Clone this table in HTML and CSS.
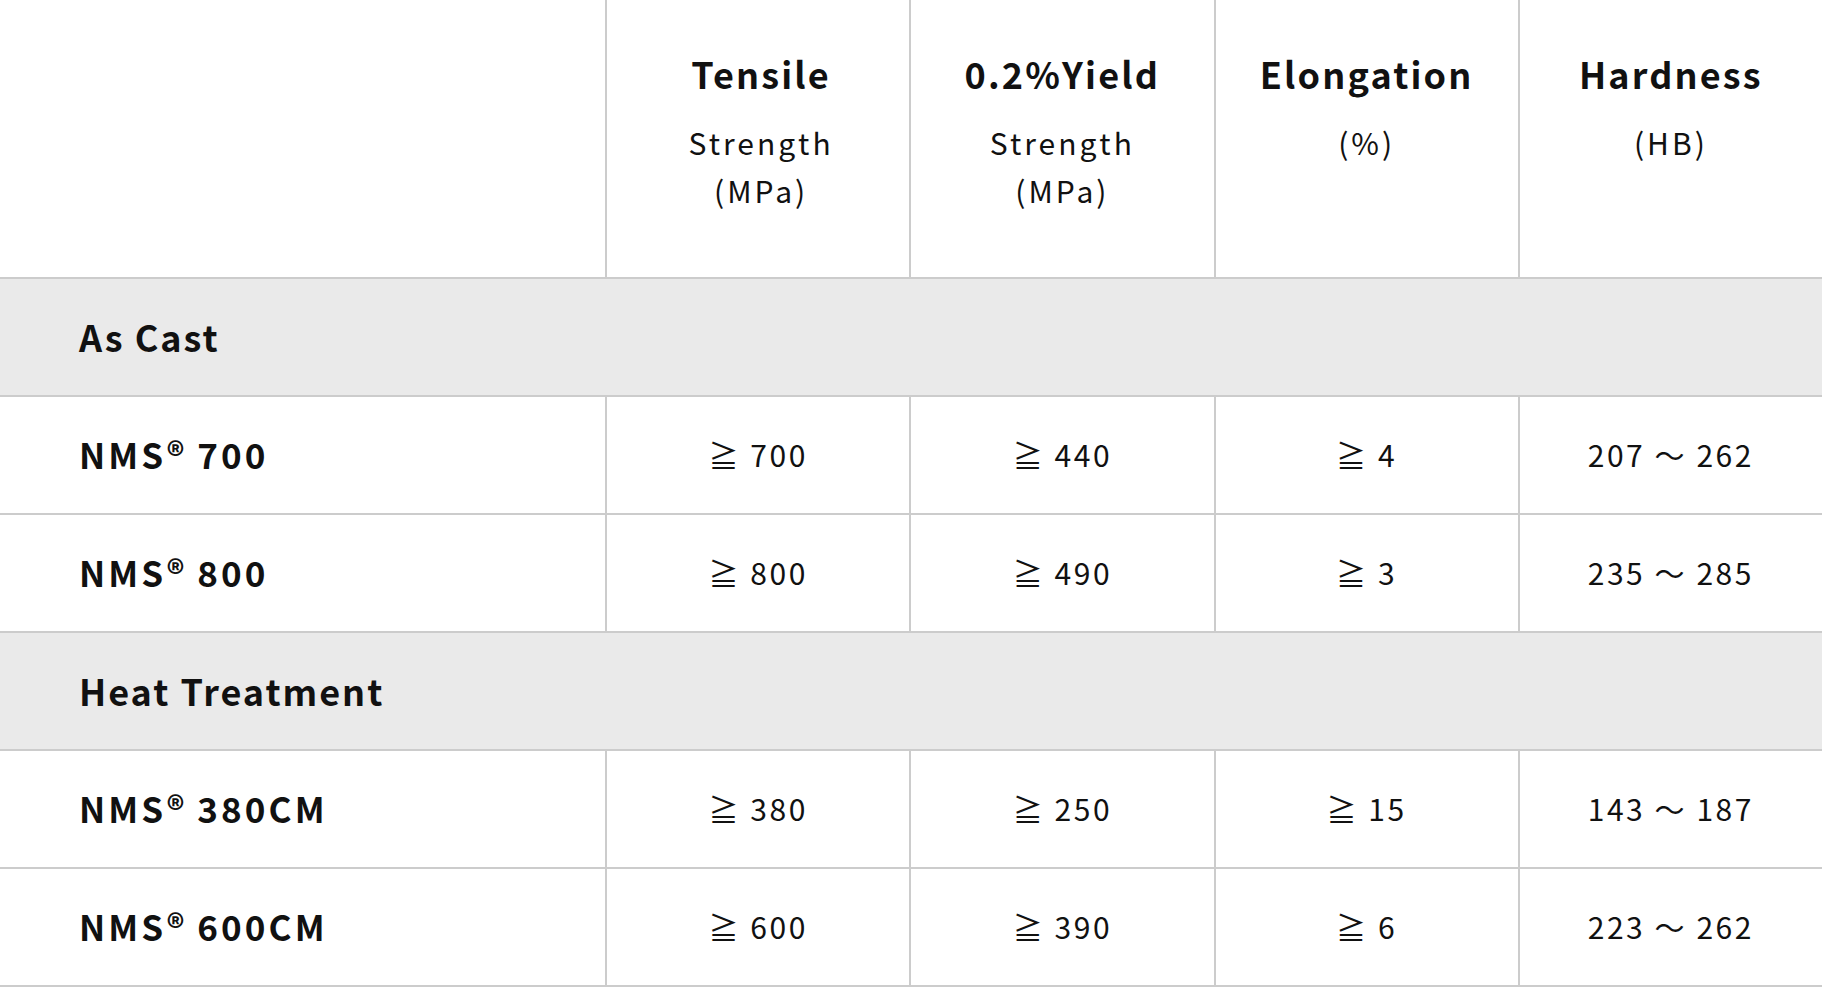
FILE: index.html
```html
<!DOCTYPE html>
<html lang="en">
<head>
<meta charset="utf-8">
<title>Mechanical Properties</title>
<link rel="stylesheet" href="styles.css">
</head>
<body>
<div class="spec">
  <div class="cell head blank"></div>
  <div class="cell head col first"><div class="title">Tensile</div><div class="sub">Strength<br>(MPa)</div></div>
  <div class="cell head col"><div class="title">0.2%Yield</div><div class="sub">Strength<br>(MPa)</div></div>
  <div class="cell head col"><div class="title">Elongation</div><div class="sub">(%)</div></div>
  <div class="cell head col"><div class="title">Hardness</div><div class="sub">(HB)</div></div>

  <div class="cell section">As Cast</div>

  <div class="cell label">NMS<span class="reg">®</span> 700</div>
  <div class="cell col val">≧ 700</div>
  <div class="cell col val">≧ 440</div>
  <div class="cell col val">≧ 4</div>
  <div class="cell col val">207 ～ 262</div>

  <div class="cell label">NMS<span class="reg">®</span> 800</div>
  <div class="cell col val">≧ 800</div>
  <div class="cell col val">≧ 490</div>
  <div class="cell col val">≧ 3</div>
  <div class="cell col val">235 ～ 285</div>

  <div class="cell section">Heat Treatment</div>

  <div class="cell label">NMS<span class="reg">®</span> 380CM</div>
  <div class="cell col val">≧ 380</div>
  <div class="cell col val">≧ 250</div>
  <div class="cell col val">≧ 15</div>
  <div class="cell col val">143 ～ 187</div>

  <div class="cell label">NMS<span class="reg">®</span> 600CM</div>
  <div class="cell col val">≧ 600</div>
  <div class="cell col val">≧ 390</div>
  <div class="cell col val">≧ 6</div>
  <div class="cell col val">223 ～ 262</div>
</div>
</body>
</html>
```

FILE: styles.css
```css
html, body {
  margin: 0;
  padding: 0;
  background: #ffffff;
}

body {
  font-family: "Noto Sans CJK JP", "Noto Sans", sans-serif;
  color: #111111;
  overflow: hidden;
}

.spec {
  display: grid;
  grid-template-columns: 605px repeat(4, 1fr);
  width: 1822px;
}

.cell {
  border-bottom: 2px solid #cccccc;
  box-sizing: content-box;
}

.col {
  border-left: 2px solid #cccccc;
}

.head {
  height: 277px;
  text-align: center;
}

.head.first {
  padding-left: 6px;
}

.title {
  padding-top: 44px;
  font-size: 36px;
  line-height: 58px;
  font-weight: 700;
  letter-spacing: 0.06em;
}

.sub {
  margin-top: 16px;
  font-size: 30px;
  line-height: 48px;
  font-weight: 400;
  letter-spacing: 0.1em;
}

.section {
  grid-column: 1 / -1;
  height: 113px;
  padding-bottom: 3px;
  background: #eaeaea;
  display: flex;
  align-items: center;
  padding-left: 79px;
  font-size: 36px;
  font-weight: 700;
  letter-spacing: 0.055em;
}

.label {
  height: 113px;
  padding-bottom: 3px;
  display: flex;
  align-items: center;
  padding-left: 79px;
  font-size: 35px;
  font-weight: 700;
  letter-spacing: 0.09em;
  white-space: pre;
}

.reg {
  letter-spacing: 0.05em;
}

.val {
  height: 114px;
  padding-bottom: 2px;
  display: flex;
  align-items: center;
  justify-content: center;
  font-size: 30px;
  font-weight: 400;
  letter-spacing: 0.085em;
  white-space: pre;
}
```
